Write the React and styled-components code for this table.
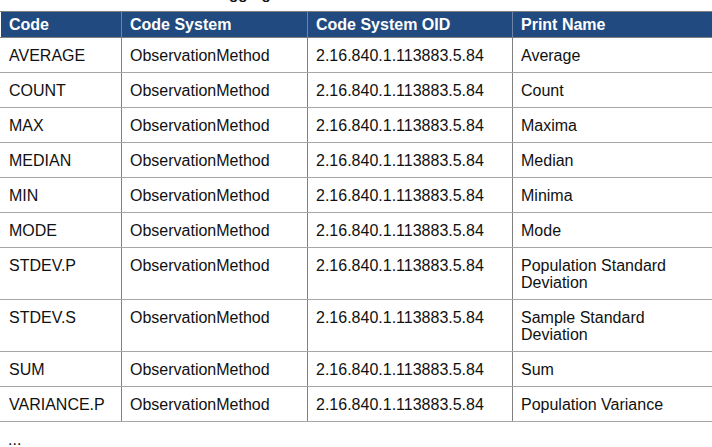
import React from "react";
import styled, { createGlobalStyle } from "styled-components";

const Global = createGlobalStyle`
  html, body { margin: 0; padding: 0; background: #fff; }
  body {
    font-family: "Liberation Sans", Arial, sans-serif;
    color: #111;
    overflow: hidden;
  }
`;

const Page = styled.div`
  width: 712px;
  height: 447px;
  overflow: hidden;
  display: flex;
  flex-direction: column;
`;

const Caption = styled.div`
  margin-top: -15px;
  padding-left: 14px;
  height: 17px;
  font-size: 15px;
  line-height: 17px;
  font-weight: bold;
  white-space: nowrap;
`;

const Table = styled.table`
  margin-top: 9px;
  width: 711px;
  border-collapse: collapse;
  table-layout: fixed;
  font-size: 16px;
  line-height: 17px;
`;

const HeadCell = styled.th`
  background: #214a80;
  color: #fff;
  font-weight: bold;
  text-align: left;
  padding: 4px 8px 4px 8px;
  border-top: 1px solid #7f7f7f;
  border-bottom: 1px solid #7f7f7f;
  border-left: 1px solid ${(p) => (p.$first ? "transparent" : "#6d86a8")};
`;

const Cell = styled.td`
  padding: 9px 8px 8px 8px;
  vertical-align: top;
  border-bottom: 1px solid #a6a6a6;
  border-left: 1px solid ${(p) => (p.$first ? "transparent" : "#808080")};
`;

const Ellipsis = styled.div`
  margin-top: 9px;
  padding-left: 8px;
  font-size: 16px;
  line-height: 17px;
`;

const rows = [
  ["AVERAGE", "Average"],
  ["COUNT", "Count"],
  ["MAX", "Maxima"],
  ["MEDIAN", "Median"],
  ["MIN", "Minima"],
  ["MODE", "Mode"],
  ["STDEV.P", "Population Standard Deviation"],
  ["STDEV.S", "Sample Standard Deviation"],
  ["SUM", "Sum"],
  ["VARIANCE.P", "Population Variance"],
];

const widths = [121, 186, 205, 199];

export default function App() {
  return (
    <Page>
      <Global />
      <Caption>Table 9: ObservationMethod Aggregation</Caption>
      <Table>
        <colgroup>
          {widths.map((w, i) => (
            <col key={i} style={{ width: w }} />
          ))}
        </colgroup>
        <thead>
          <tr>
            <HeadCell $first>Code</HeadCell>
            <HeadCell>Code System</HeadCell>
            <HeadCell>Code System OID</HeadCell>
            <HeadCell>Print Name</HeadCell>
          </tr>
        </thead>
        <tbody>
          {rows.map(([code, name]) => (
            <tr key={code}>
              <Cell $first>{code}</Cell>
              <Cell>ObservationMethod</Cell>
              <Cell>2.16.840.1.113883.5.84</Cell>
              <Cell>{name}</Cell>
            </tr>
          ))}
        </tbody>
      </Table>
      <Ellipsis>...</Ellipsis>
    </Page>
  );
}
